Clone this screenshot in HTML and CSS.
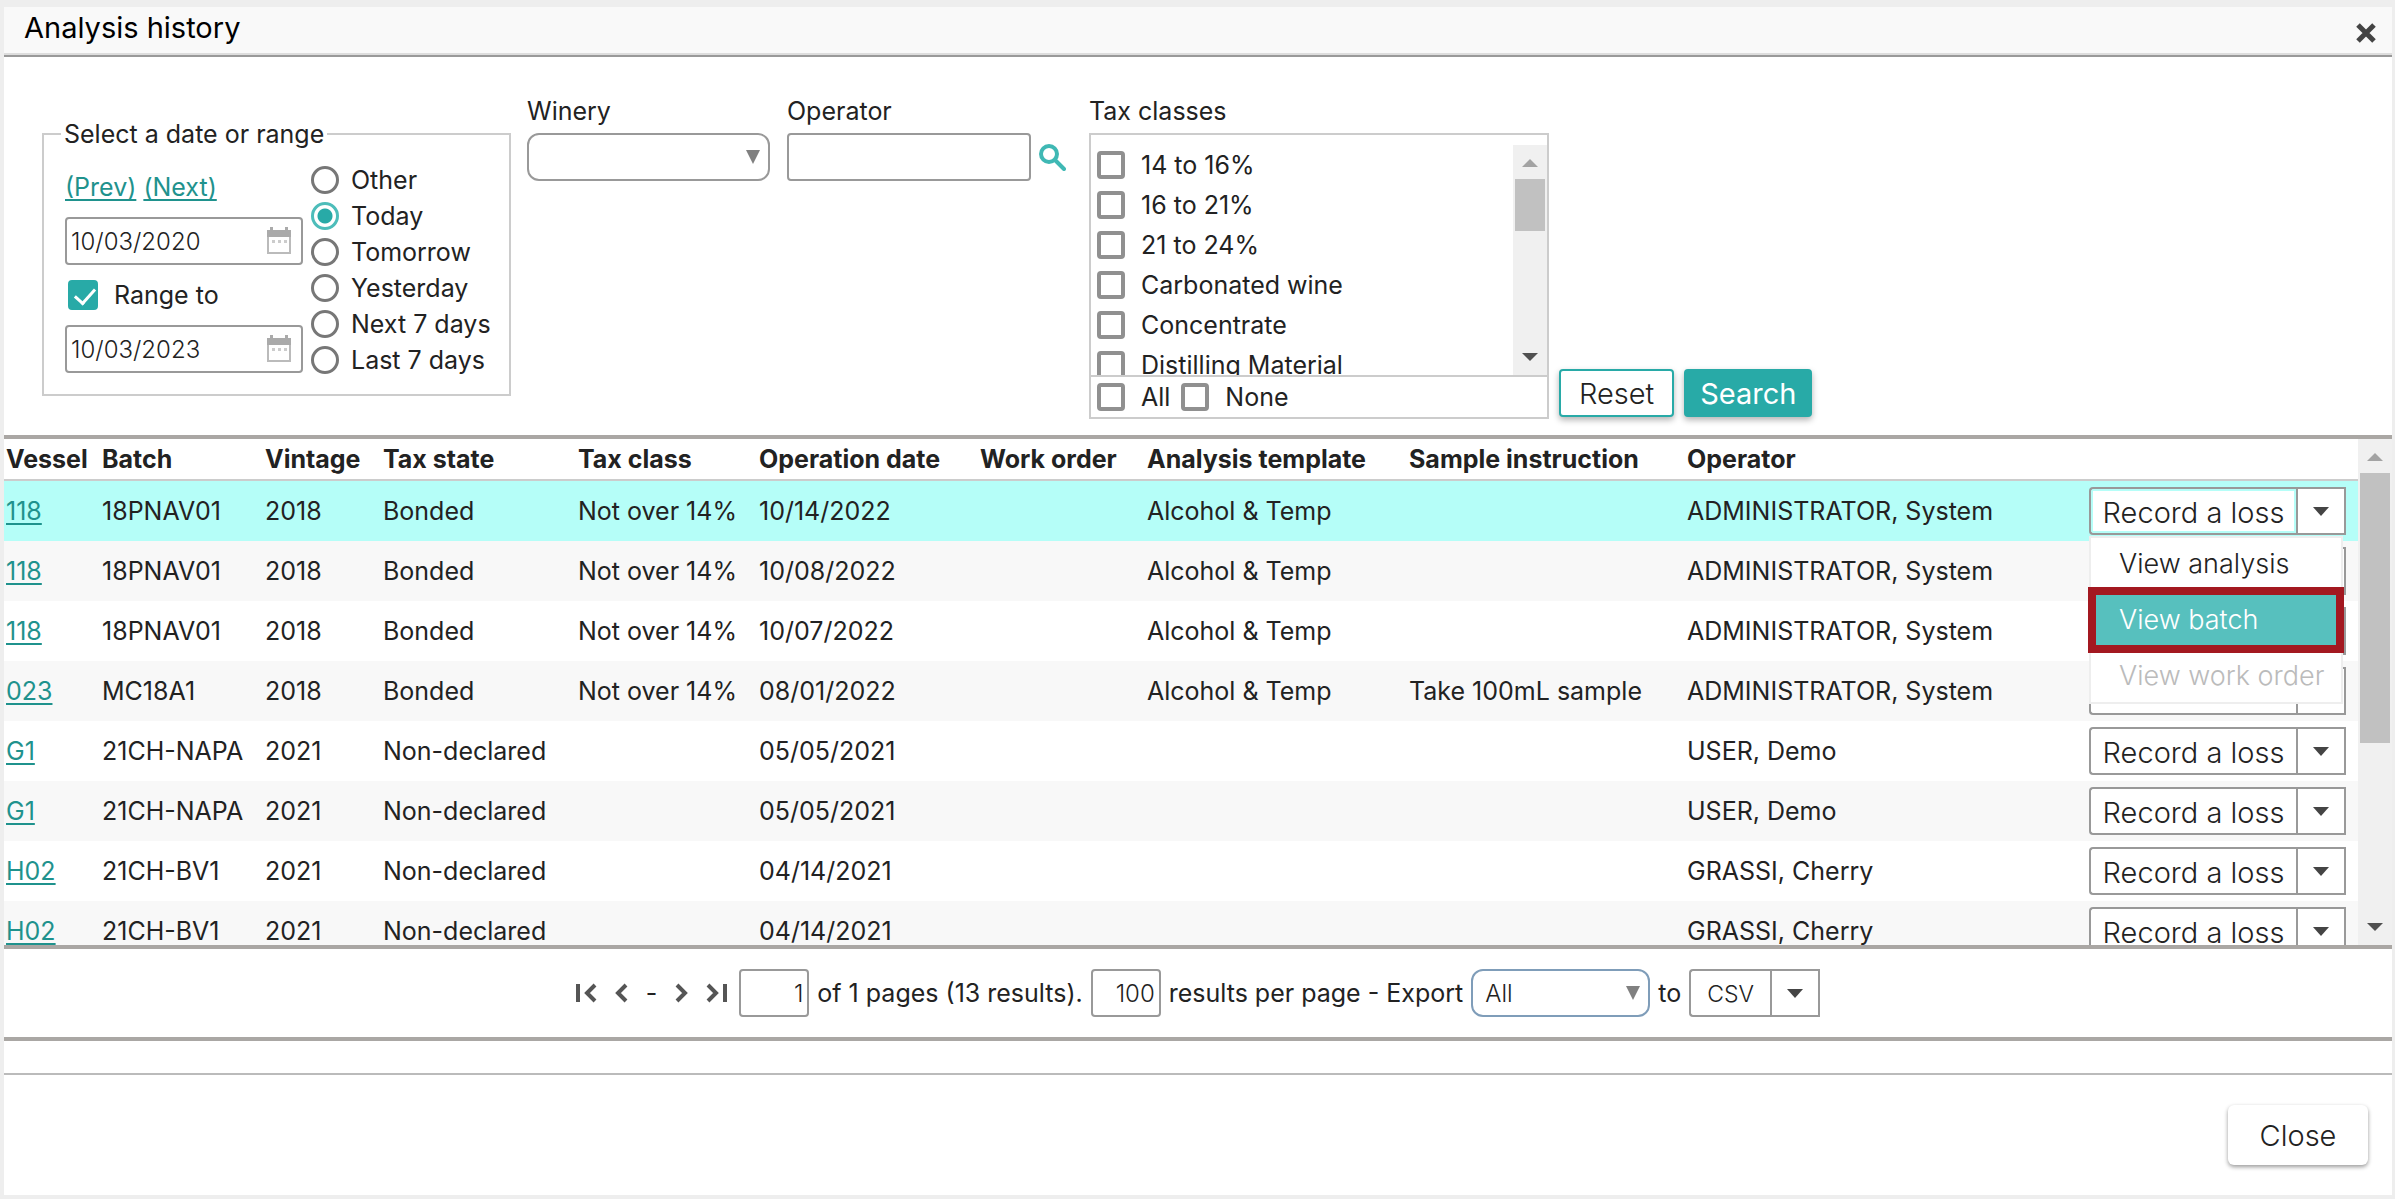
FILE: index.html
```html
<!DOCTYPE html>
<html lang="en">
<head>
    <meta charset="UTF-8">
    <meta name="viewport" content="width=device-width, initial-scale=1.0">
    <title>Analysis history</title>
    <link rel="stylesheet" href="styles.css">
</head>
<body>
    <div class="dialog">
        <header class="dialog-header">
            <h1>Analysis history</h1>
            <button class="icon-btn" id="dismiss-btn" aria-label="Close dialog">
                <svg width="20" height="20" viewBox="0 0 20 20"><path d="M2 2l16 16M18 2L2 18" stroke="#444" stroke-width="5"/></svg>
            </button>
        </header>

        <form class="filters">
            <fieldset class="date-range">
                <legend>Select a date or range</legend>
                <div class="date-columns">
                    <div class="date-inputs">
                        <div class="date-links"><a href="#">(Prev)</a> <a href="#">(Next)</a></div>
                        <div class="date-box">
                            <input class="text-input" type="text" value="10/03/2020" aria-label="From date">
                            <svg class="calendar" width="24" height="28" viewBox="0 0 24 28"><path d="M1 5h22v21H1z" fill="#fff" stroke="#bbb" stroke-width="2"/><path d="M0 3h3V0h3v3h12V0h3v3h3v7H0z" fill="#aaa"/><path d="M5 13h3v3H5zM11 13h3v3h-3zM17 13h3v3h-3z" fill="#ccc"/></svg>
                        </div>
                        <label class="range-to"><input class="check" type="checkbox" checked> Range to</label>
                        <div class="date-box">
                            <input class="text-input" type="text" value="10/03/2023" aria-label="To date">
                            <svg class="calendar" width="24" height="28" viewBox="0 0 24 28"><path d="M1 5h22v21H1z" fill="#fff" stroke="#bbb" stroke-width="2"/><path d="M0 3h3V0h3v3h12V0h3v3h3v7H0z" fill="#aaa"/><path d="M5 13h3v3H5zM11 13h3v3h-3zM17 13h3v3h-3z" fill="#ccc"/></svg>
                        </div>
                    </div>
                    <div class="date-presets">
                        <label><input class="radio" type="radio" name="preset"> Other</label>
                        <label><input class="radio" type="radio" name="preset" checked> Today</label>
                        <label><input class="radio" type="radio" name="preset"> Tomorrow</label>
                        <label><input class="radio" type="radio" name="preset"> Yesterday</label>
                        <label><input class="radio" type="radio" name="preset"> Next 7 days</label>
                        <label><input class="radio" type="radio" name="preset"> Last 7 days</label>
                    </div>
                </div>
            </fieldset>

            <div class="field">
                <label for="winery">Winery</label>
                <div class="select-box">
                    <select id="winery"><option></option></select>
                </div>
            </div>

            <div class="field">
                <label for="operator">Operator</label>
                <div class="operator-row">
                    <input class="text-input" type="text" id="operator">
                    <button class="icon-btn" type="button" aria-label="Find operator">
                        <svg width="27" height="27" viewBox="0 0 27 27" fill="none" stroke="#3fb8b4"><circle cx="10" cy="10" r="8" stroke-width="4"/><path d="M16 16l9 9" stroke-width="4" stroke-linecap="round"/></svg>
                    </button>
                </div>
            </div>

            <div class="field tax-field">
                <span>Tax classes</span>
                <div class="tax-box">
                    <div class="tax-scroll">
                        <div class="tax-list">
                            <label><input class="check" type="checkbox"> 14 to 16%</label>
                            <label><input class="check" type="checkbox"> 16 to 21%</label>
                            <label><input class="check" type="checkbox"> 21 to 24%</label>
                            <label><input class="check" type="checkbox"> Carbonated wine</label>
                            <label><input class="check" type="checkbox"> Concentrate</label>
                            <label><input class="check" type="checkbox"> Distilling Material</label>
                        </div>
                        <div class="scrollbar">
                            <span class="arrow-up"></span>
                            <span class="thumb"></span>
                            <span class="arrow-down"></span>
                        </div>
                    </div>
                    <div class="tax-all">
                        <label><input class="check" type="checkbox"> All</label>
                        <label><input class="check" type="checkbox"> None</label>
                    </div>
                </div>
            </div>

            <div class="filter-buttons">
                <button class="reset-btn" type="reset">Reset</button>
                <button class="search-btn" type="button">Search</button>
            </div>
        </form>

        <div class="results">
            <div class="table-wrap">
                <table>
                    <colgroup>
                        <col class="col-vessel">
                        <col class="col-batch">
                        <col class="col-vintage">
                        <col class="col-state">
                        <col class="col-class">
                        <col class="col-date">
                        <col class="col-order">
                        <col class="col-template">
                        <col class="col-sample">
                        <col>
                        <col class="col-actions">
                    </colgroup>
                    <thead>
                        <tr>
                            <th>Vessel</th><th>Batch</th><th>Vintage</th><th>Tax state</th><th>Tax class</th><th>Operation date</th><th>Work order</th><th>Analysis template</th><th>Sample instruction</th><th>Operator</th><th></th>
                        </tr>
                    </thead>
                    <tbody>
                        <tr class="selected">
                            <td><a href="#">118</a></td><td>18PNAV01</td><td>2018</td><td>Bonded</td><td>Not over 14%</td><td>10/14/2022</td><td></td><td>Alcohol &amp; Temp</td><td></td><td>ADMINISTRATOR, System</td>
                            <td>
                                <div class="split">
                                    <button class="split-main">Record a loss</button><button class="split-arrow" aria-label="More actions"></button>
                                    <div class="menu">
                                        <button>View analysis</button>
                                        <button class="active">View batch</button>
                                        <button disabled>View work order</button>
                                    </div>
                                </div>
                            </td>
                        </tr>
                        <tr>
                            <td><a href="#">118</a></td><td>18PNAV01</td><td>2018</td><td>Bonded</td><td>Not over 14%</td><td>10/08/2022</td><td></td><td>Alcohol &amp; Temp</td><td></td><td>ADMINISTRATOR, System</td>
                            <td><div class="split"><button class="split-main">Record a loss</button><button class="split-arrow" aria-label="More actions"></button></div></td>
                        </tr>
                        <tr>
                            <td><a href="#">118</a></td><td>18PNAV01</td><td>2018</td><td>Bonded</td><td>Not over 14%</td><td>10/07/2022</td><td></td><td>Alcohol &amp; Temp</td><td></td><td>ADMINISTRATOR, System</td>
                            <td><div class="split"><button class="split-main">Record a loss</button><button class="split-arrow" aria-label="More actions"></button></div></td>
                        </tr>
                        <tr>
                            <td><a href="#">023</a></td><td>MC18A1</td><td>2018</td><td>Bonded</td><td>Not over 14%</td><td>08/01/2022</td><td></td><td>Alcohol &amp; Temp</td><td>Take 100mL sample</td><td>ADMINISTRATOR, System</td>
                            <td><div class="split"><button class="split-main">Record a loss</button><button class="split-arrow" aria-label="More actions"></button></div></td>
                        </tr>
                        <tr>
                            <td><a href="#">G1</a></td><td>21CH-NAPA</td><td>2021</td><td>Non-declared</td><td></td><td>05/05/2021</td><td></td><td></td><td></td><td>USER, Demo</td>
                            <td><div class="split"><button class="split-main">Record a loss</button><button class="split-arrow" aria-label="More actions"></button></div></td>
                        </tr>
                        <tr>
                            <td><a href="#">G1</a></td><td>21CH-NAPA</td><td>2021</td><td>Non-declared</td><td></td><td>05/05/2021</td><td></td><td></td><td></td><td>USER, Demo</td>
                            <td><div class="split"><button class="split-main">Record a loss</button><button class="split-arrow" aria-label="More actions"></button></div></td>
                        </tr>
                        <tr>
                            <td><a href="#">H02</a></td><td>21CH-BV1</td><td>2021</td><td>Non-declared</td><td></td><td>04/14/2021</td><td></td><td></td><td></td><td>GRASSI, Cherry</td>
                            <td><div class="split"><button class="split-main">Record a loss</button><button class="split-arrow" aria-label="More actions"></button></div></td>
                        </tr>
                        <tr>
                            <td><a href="#">H02</a></td><td>21CH-BV1</td><td>2021</td><td>Non-declared</td><td></td><td>04/14/2021</td><td></td><td></td><td></td><td>GRASSI, Cherry</td>
                            <td><div class="split"><button class="split-main">Record a loss</button><button class="split-arrow" aria-label="More actions"></button></div></td>
                        </tr>
                    </tbody>
                </table>
            </div>
            <div class="scrollbar results-scrollbar">
                <span class="arrow-up"></span>
                <span class="thumb"></span>
                <span class="arrow-down"></span>
            </div>
        </div>

        <div class="pager">
            <div class="pager-nav">
                <button class="icon-btn" aria-label="First page"><svg width="22" height="20" viewBox="0 0 22 20"><path d="M2 1v18M19 2l-8 8 8 8"/></svg></button>
                <button class="icon-btn" aria-label="Previous page"><svg width="14" height="20" viewBox="0 0 14 20"><path d="M11 2l-8 8 8 8"/></svg></button>
                <span>-</span>
                <button class="icon-btn" aria-label="Next page"><svg width="14" height="20" viewBox="0 0 14 20"><path d="M3 2l8 8-8 8"/></svg></button>
                <button class="icon-btn" aria-label="Last page"><svg width="22" height="20" viewBox="0 0 22 20"><path d="M20 1v18M3 2l8 8-8 8"/></svg></button>
            </div>
            <input class="text-input page-input" type="text" value="1" aria-label="Page">
            <span>of 1 pages (13 results).</span>
            <input class="text-input page-input" type="text" value="100" id="per-page">
            <span><label for="per-page">results per page</label> - <label for="export">Export</label></span>
            <div class="select-box export-box">
                <select id="export"><option>All</option></select>
            </div>
            <span>to</span>
            <div class="split split-small"><button class="split-main">CSV</button><button class="split-arrow" aria-label="More formats"></button></div>
        </div>

        <footer class="dialog-footer">
            <button class="close-btn">Close</button>
        </footer>
    </div>
</body>
</html>
```
FILE: styles.css
```css
* {
    box-sizing: border-box;
}

body {
    margin: 0;
    background-color: #eee;
    font-family: Inter, 'Open Sans', sans-serif;
    font-size: 25px;
    line-height: 30px;
    color: #222;
}

button, input, select {
    font-family: inherit;
    color: inherit;
    margin: 0;
}

button {
    padding: 0;
    cursor: pointer;
}

a {
    color: #1f928d;
    text-decoration-thickness: 2px;
    text-underline-offset: 3px;
}

.dialog {
    display: flex;
    flex-direction: column;
    height: 100vh;
    border: solid #eee;
    border-width: 7px 3px 4px 4px;
    background-color: #fff;
}

.dialog-header {
    display: flex;
    justify-content: space-between;
    align-items: center;
    height: 50px;
    padding: 0 16px 0 20px;
    background-color: #f9f9f9;
    border-bottom: 2px solid #999;
    box-shadow: inset 0 -2px #ddd;
}

.dialog-header h1 {
    margin: 0;
    padding-bottom: 6px;
    font-size: 29px;
    font-weight: normal;
    color: #000;
}

.icon-btn {
    display: flex;
    background: none;
    border: none;
}

#dismiss-btn {
    padding-top: 4px;
}

/* Filters */
.filters {
    display: flex;
    align-items: flex-start;
    padding: 39px 0 16px 38px;
}

.field > label, .field > span {
    display: block;
    margin-bottom: 7px;
}

.text-input {
    width: 100%;
    height: 48px;
    padding: 0 4px;
    border: 2px solid #999;
    border-radius: 4px;
    font-size: 24px;
    font-weight: 300;
    background-color: #fff;
}

.date-range {
    width: 469px;
    margin: 23px 16px 0 0;
    padding: 13px 0 16px 21px;
    border: 2px solid #ccc;
}

.date-range legend {
    margin-left: -4px;
    padding: 0 3px;
}

.date-columns {
    display: flex;
    gap: 8px;
}

.date-inputs {
    display: flex;
    flex-direction: column;
    gap: 15px;
    width: 238px;
    padding-top: 10px;
}

.date-box, .select-box {
    position: relative;
}

.calendar {
    position: absolute;
    top: 10px;
    right: 12px;
}

.range-to {
    display: flex;
    align-items: center;
    gap: 16px;
    padding-left: 3px;
}

.date-presets label {
    display: flex;
    align-items: center;
    gap: 12px;
    height: 36px;
}

.radio, .check {
    appearance: none;
    flex: none;
    width: 28px;
    height: 28px;
    border: 3px solid #777;
    background-color: #fff;
}

.radio {
    border-radius: 50%;
}

.radio:checked {
    border-color: #4dbdba;
    background: radial-gradient(circle, #28aaa7 7px, #fff 8px);
}

.check {
    position: relative;
    border-width: 4px;
    border-color: #909090;
    border-radius: 4px;
}

.check:checked {
    width: 30px;
    height: 30px;
    background-color: #28aaa7;
    border-color: #28aaa7;
}

.check:checked::after {
    content: '';
    position: absolute;
    top: 0;
    left: 7px;
    width: 9px;
    height: 17px;
    border: solid #fff;
    border-width: 0 3px 3px 0;
    transform: rotate(42deg);
}

select {
    appearance: none;
    width: 243px;
    height: 48px;
    padding: 0 12px;
    border: 2px solid #999;
    border-radius: 12px;
    font-size: 24px;
    font-weight: 300;
    background-color: #fff;
}

.select-box {
    display: flex;
}

.select-box::after {
    content: '';
    position: absolute;
    top: 17px;
    right: 10px;
    border: 7px solid transparent;
    border-top: 14px solid #808080;
    border-bottom: none;
    pointer-events: none;
}

.field {
    margin-right: 17px;
}

.operator-row {
    display: flex;
    align-items: center;
    gap: 8px;
}

.operator-row .text-input {
    width: 244px;
}

.tax-field {
    width: 460px;
    margin: 0 10px 0 6px;
}

.tax-box {
    border: 2px solid #ccc;
}

.tax-scroll {
    display: flex;
    height: 240px;
    padding-top: 10px;
    overflow: hidden;
}

.tax-list {
    flex: 1;
}

.tax-list label, .tax-all label {
    display: flex;
    align-items: center;
    gap: 16px;
    height: 40px;
    padding-left: 6px;
}

.tax-all {
    display: flex;
    gap: 5px;
    height: 42px;
    border-top: 2px solid #ccc;
}

.scrollbar {
    display: flex;
    flex-direction: column;
    align-items: center;
    width: 34px;
    background-color: #f0f0f0;
}

.arrow-up, .arrow-down {
    border: 8px solid transparent;
}

.arrow-up {
    margin: 14px 0 12px;
    border-top: none;
    border-bottom-color: #a3a3a3;
}

.arrow-down {
    margin: auto 0 14px;
    border-bottom: none;
    border-top-color: #505050;
}

.thumb {
    width: 30px;
    height: 52px;
    background-color: #c1c1c1;
}

.filter-buttons {
    display: flex;
    align-self: flex-end;
    gap: 10px;
    padding-bottom: 2px;
}

.filter-buttons button {
    height: 48px;
    padding: 0 18px;
    border: 2px solid #28aaa7;
    border-radius: 4px;
    font-size: 29px;
    font-weight: 300;
    background-color: #fff;
    box-shadow: 0 3px 6px rgba(0, 0, 0, 0.3);
}

.filter-buttons .search-btn {
    padding: 0 14px;
    background-color: #28aaa7;
    color: #fff;
    font-weight: normal;
}

/* Results */
.results {
    display: flex;
    flex: 1;
    min-height: 0;
    border: solid #aaa7a4;
    border-width: 4px 0;
}

.table-wrap {
    flex: 1;
    overflow: hidden;
}

table {
    width: 100%;
    table-layout: fixed;
    border-collapse: separate;
    border-spacing: 0;
}

.col-vessel { width: 96px; }
.col-batch { width: 163px; }
.col-vintage { width: 118px; }
.col-state { width: 195px; }
.col-class { width: 181px; }
.col-date { width: 221px; }
.col-order { width: 167px; }
.col-template { width: 262px; }
.col-sample { width: 278px; }
.col-actions { width: 271px; }

th, td {
    padding: 0 2px;
    text-align: left;
    white-space: nowrap;
}

th {
    height: 42px;
    font-weight: 700;
    border-bottom: 2px solid #ccc;
}

td {
    height: 60px;
}

tbody tr:nth-child(even) {
    background-color: #f8f8f8;
}

tbody tr.selected {
    background-color: #b5fef8;
}

.split {
    position: relative;
    display: flex;
    width: 257px;
    height: 48px;
}

.split button {
    background-color: #fff;
    font-size: 29px;
    font-weight: 300;
}

.split .split-main {
    flex: 1;
    padding-top: 2px;
    border: 2px solid #999;
    border-right: none;
    border-radius: 4px 0 0 4px;
}

.selected .split-main {
    box-shadow: inset 0 0 0 2px #b5fef8;
}

.split .split-arrow {
    display: flex;
    align-items: center;
    justify-content: center;
    width: 50px;
    border: 2px solid #999;
}

.split-arrow::after {
    content: '';
    border: 8px solid transparent;
    border-top: 9px solid #444;
    border-bottom: none;
}

.menu {
    position: absolute;
    top: 49px;
    left: 0;
    z-index: 1;
    width: 254px;
    background-color: #fff;
    box-shadow: inset 0 0 0 2px #eee;
}

.split .menu button {
    display: block;
    width: 246px;
    height: 56px;
    margin: 0 4px;
    padding: 0 0 2px 26px;
    border: none;
    font-size: 27px;
    text-align: left;
    white-space: nowrap;
    background: none;
}

.split .menu .active {
    background-color: #57c0be;
    color: #fff;
    box-shadow: 0 0 0 5px #a31820, inset 0 0 0 3px #a31820;
}

.menu button:disabled {
    color: #bbb;
}

.results-scrollbar .thumb {
    height: 270px;
}

/* Pager */
.pager {
    display: flex;
    align-items: center;
    justify-content: center;
    gap: 8px;
    height: 92px;
    border-bottom: 4px solid #aaa7a4;
}

.pager-nav {
    display: flex;
    align-items: center;
    gap: 17px;
    margin-right: 4px;
}

.pager-nav path {
    fill: none;
    stroke: #555;
    stroke-width: 4;
}

.page-input {
    width: 70px;
    text-align: right;
}

.export-box select {
    width: 179px;
    border-color: #7f9db9;
}

.split-small {
    width: 131px;
}

.split.split-small button {
    font-size: 23px;
}

.dialog-footer {
    display: flex;
    justify-content: flex-end;
    margin-top: 32px;
    padding: 30px 24px;
    border-top: 2px solid #bbb;
}

.close-btn {
    width: 140px;
    height: 60px;
    border: none;
    border-radius: 6px;
    font-size: 29px;
    font-weight: 300;
    background-color: #fff;
    box-shadow: 0 2px 4px rgba(0, 0, 0, 0.4);
}
```
